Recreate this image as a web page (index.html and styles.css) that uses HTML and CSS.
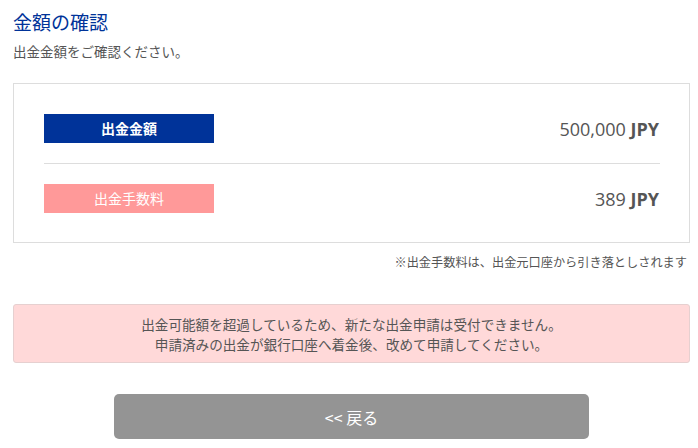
FILE: index.html
```html
<!DOCTYPE html>
<html lang="ja">
<head>
    <meta charset="UTF-8">
    <meta name="viewport" content="width=device-width, initial-scale=1.0">
    <title>金額の確認</title>
    <link rel="stylesheet" href="styles.css">
</head>
<body>
    <h1 class="page-title">金額の確認</h1>
    <p class="lead">出金金額をご確認ください。</p>

    <div class="summary">
        <div class="summary-row">
            <span class="label label-amount">出金金額</span>
            <span class="value">500,000 <b>JPY</b></span>
        </div>
        <div class="summary-row">
            <span class="label label-fee">出金手数料</span>
            <span class="value">389 <b>JPY</b></span>
        </div>
    </div>
    <p class="note">※出金手数料は、出金元口座から引き落としされます</p>

    <div class="alert">
        出金可能額を超過しているため、新たな出金申請は受付できません。<br>
        申請済みの出金が銀行口座へ着金後、改めて申請してください。
    </div>

    <div class="actions">
        <button type="button" class="btn-back">&lt;&lt; 戻る</button>
    </div>
</body>
</html>
```

FILE: styles.css
```css
body {
    font-family: "Noto Sans CJK JP", "Noto Sans", sans-serif;
    color: #555;
    background-color: #fff;
    margin: 0;
    padding: 0 8px 0 13px;
}

.page-title {
    color: #003399;
    font-size: 19px;
    font-weight: normal;
    line-height: 26px;
    margin: 9px 0 0;
}

.lead {
    font-size: 13.5px;
    line-height: 20px;
    margin: 6px 0 0;
}

.summary {
    border: 1px solid #ddd;
    padding: 30px 29px 29px 30px;
    margin-top: 22px;
}

.summary-row {
    display: flex;
    align-items: center;
    justify-content: space-between;
}

.summary-row + .summary-row {
    border-top: 1px solid #ddd;
    margin-top: 20px;
    padding-top: 20px;
}

.label {
    width: 170px;
    height: 29px;
    line-height: 29px;
    text-align: center;
    color: #fff;
    font-size: 14px;
}

.label-amount {
    background-color: #003399;
    font-weight: bold;
}

.label-fee {
    background-color: #ff9999;
}

.value {
    font-family: "Open Sans", "Noto Sans", sans-serif;
    font-size: 18px;
    color: #555;
    margin-right: 1px;
}

.value b {
    font-weight: bold;
}

.note {
    font-size: 12.2px;
    line-height: 18px;
    text-align: right;
    margin: 10px 0 0;
    padding-right: 3px;
}

.alert {
    background-color: #ffd9d9;
    border: 1px solid #e6d0d0;
    border-radius: 3px;
    padding: 9px 10px 8px;
    margin-top: 33px;
    text-align: center;
    font-size: 13.6px;
    line-height: 20px;
}

.actions {
    display: flex;
    justify-content: center;
    margin-top: 31px;
}

.btn-back {
    width: 475px;
    height: 45px;
    background-color: #949494;
    color: #fff;
    border: none;
    border-radius: 5px;
    font-family: "Noto Sans CJK JP", "Noto Sans", sans-serif;
    font-size: 16px;
    cursor: pointer;
}
```
